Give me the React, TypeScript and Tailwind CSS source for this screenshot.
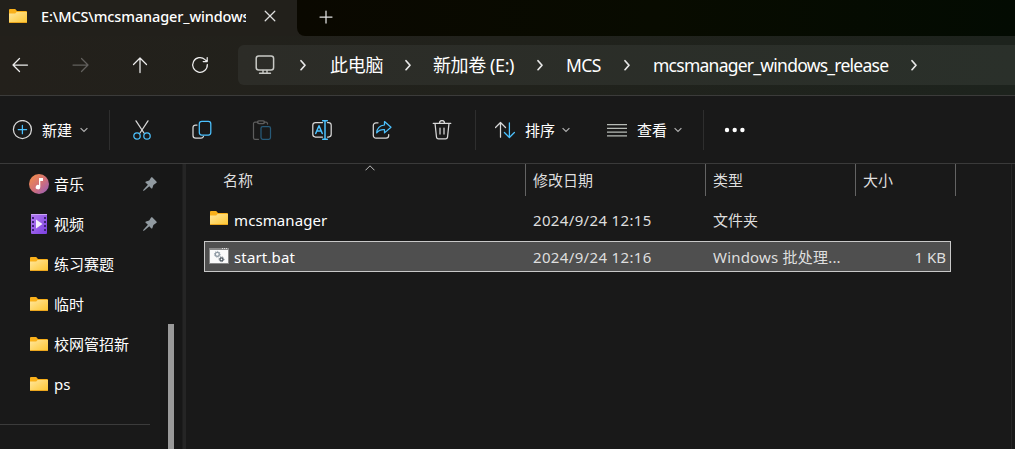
import React from 'react';

const BLUE = '#4cc2ff';

function Folder() {
  return (
    <svg width="18" height="14" viewBox="0 0 18 14" className="shrink-0">
      <defs>
        <linearGradient id="folderFront" x1="0" y1="0" x2="1" y2="1">
          <stop offset="0" stopColor="#ffe69c" />
          <stop offset="1" stopColor="#fdc631" />
        </linearGradient>
      </defs>
      <path d="M0 1a1 1 0 0 1 1-1h5.2l1.8 2h9a1 1 0 0 1 1 1v9H0z" fill="#f9b01a" />
      <path d="M0 4.6h6.2L7.6 3H18v10a1 1 0 0 1-1 1H1a1 1 0 0 1-1-1z" fill="url(#folderFront)" />
      <path d="M0 13h18a1 1 0 0 1-1 1H1a1 1 0 0 1-1-1z" fill="#eba61e" />
    </svg>
  );
}

function Icon({ children, className = '', color = '#d8d8d8' }: { children: React.ReactNode; className?: string; color?: string }) {
  return (
    <svg width="20" height="20" viewBox="0 0 20 20" fill="none" stroke={color} strokeWidth="1.25" strokeLinecap="round" strokeLinejoin="round" className={`shrink-0 ${className}`}>
      {children}
    </svg>
  );
}

function Crumb() {
  return (
    <Icon color="#e8e8e8">
      <path d="M8 5.7 12 10.2 8 14.7" strokeWidth="1.7" />
    </Icon>
  );
}

function Down() {
  return (
    <svg width="8" height="6" viewBox="0 0 8 6" fill="none" stroke="#b0b0b0" strokeWidth="1.2" className="shrink-0">
      <path d="M.6 1.1 4 4.5 7.4 1.1" />
    </svg>
  );
}

function Divider() {
  return <div className="h-10 w-px shrink-0 bg-[#2e2e2e]" />;
}

function Pin() {
  return (
    <svg width="14" height="14" viewBox="0 0 14 14" className="shrink-0">
      <path d="M7.900.8c.6-.6 1.200-.6 1.800 0l3.700 3.700c.5.5.5 1.200-.2 1.600l-2.800 1.800-1 3.100c-.2.700-.8.800-1.300.3L6.300 9.200 1.300 13.600 0 14l.4-1.300 4.500-5L2.700 5.700c-.5-.5-.3-1.100.3-1.300l3.200-1z" fill="#929ba1" />
    </svg>
  );
}

function Music() {
  return (
    <svg width="20" height="20" viewBox="0 0 20 20" className="-mx-px shrink-0">
      <defs>
        <linearGradient id="musicDisc" x1="0.1" y1="0.1" x2="0.9" y2="0.95">
          <stop offset="0" stopColor="#f08a4e" />
          <stop offset="0.55" stopColor="#cf6f7c" />
          <stop offset="1" stopColor="#9b5fb5" />
        </linearGradient>
      </defs>
      <circle cx="10" cy="10" r="10" fill="url(#musicDisc)" />
      <path d="M10 4h4v3h-2.700v6a2.300 2.300 0 1 1-1.300-2z" fill="#fff" />
    </svg>
  );
}

function Film() {
  return (
    <svg width="16" height="20" viewBox="0 0 16 20" className="mx-px shrink-0">
      <defs>
        <linearGradient id="filmBody" x1="0" y1="0" x2="1" y2="1">
          <stop offset="0" stopColor="#b47cf2" />
          <stop offset="1" stopColor="#7b3fe0" />
        </linearGradient>
      </defs>
      <rect width="16" height="20" rx="1" fill="url(#filmBody)" />
      <path d="M0 .5h16" stroke="#c9a4f7" />
      {[3, 7, 11, 15].map((y) => (
        <g key={y} fill="#3f2478">
          <rect x="1" y={y} width="2" height="2" />
          <rect x="13" y={y} width="2" height="2" />
        </g>
      ))}
      <path d="M5 5.500 11.500 10 5 14.500z" fill="#f4eefc" />
    </svg>
  );
}

function Gear({ x, y, r, color }: { x: number; y: number; r: number; color: string }) {
  return (
    <g stroke={color} fill="none">
      <circle cx={x} cy={y} r={r} strokeWidth="1.300" />
      <circle cx={x} cy={y} r={r + 0.9} strokeWidth="1" strokeDasharray="1.100 1.100" />
    </g>
  );
}

function BatFile() {
  return (
    <svg width="20" height="16" viewBox="0 0 20 16" className="-mx-px shrink-0">
      <rect width="20" height="16" fill="#898989" />
      <rect x="1" y="2" width="18" height="13" fill="#fafafa" />
      <path d="M13 .5h1m1 0h1m1 0h1" stroke="#ddd" />
      <Gear x={8.3} y={6.3} r={2} color="#8f9aa4" />
      <Gear x={12.5} y={11.3} r={1.5} color="#4f5962" />
    </svg>
  );
}

const pinned = [
  { icon: <Music />, name: '音乐', pin: true },
  { icon: <Film />, name: '视频', pin: true },
  { icon: <Folder />, name: '练习赛题' },
  { icon: <Folder />, name: '临时' },
  { icon: <Folder />, name: '校网管招新' },
  { icon: <Folder />, name: 'ps' },
];

export default function App() {
  return (
    <div className="flex h-[449px] w-[1015px] flex-col overflow-hidden bg-[#191919] text-[15px] leading-5 text-white [font-family:'Noto_Sans','Noto_Sans_CJK_SC',sans-serif]">
      <header className="h-24 shrink-0 border-b border-[#3b3b3a] bg-linear-to-r from-[#23201b] via-[#21221c] to-[#1d231d]">
        <div className="flex h-9">
          <div className="flex h-9 w-[297px] shrink-0 items-start bg-[#22201b] pl-[9px]">
            <div className="pt-[9px]"><Folder /></div>
            <span className="ml-[14px] mt-[6px] w-[205px] overflow-hidden whitespace-nowrap text-[14.5px] font-medium tracking-[-0.13px]">E:\MCS\mcsmanager_windows</span>
            <Icon className="ml-[14px] mt-[6px]" color="#dedede"><path d="m5.2 5.2 9.600 9.600m0-9.600-9.600 9.600" /></Icon>
          </div>
          <div className="h-9 flex-1 bg-[#22201b]">
            <div className="h-9 rounded-bl-lg bg-linear-to-r from-[#0a0800] via-[#080b00] to-[#030b02] pl-[19px] pt-[7px]">
              <Icon color="#e2e2e2"><path d="M10 4v12M4 10h12" /></Icon>
            </div>
          </div>
        </div>
        <div className="flex h-[59px] items-start pt-[9px]">
          <div className="flex h-10 gap-5">
            <div className="flex w-10 items-center justify-center"><Icon color="#ededed"><path d="M17.500 10H3M9.500 3.500 3 10 9.500 16.500" /></Icon></div>
            <div className="flex w-10 items-center justify-center"><Icon color="#62605d"><path d="M3 10h14.500M11.500 3.500 18 10l-6.500 6.500" /></Icon></div>
            <div className="flex w-10 items-center justify-center"><Icon color="#ededed"><path d="M10 17.500V3M3.500 9.500 10 3l6.500 6.500" /></Icon></div>
            <div className="flex w-10 items-center justify-center"><Icon color="#ededed"><path d="M17.300 9.500A7.300 7.300 0 1 1 15 4.600l2 1.900M17.200 2.500v4h-4" /></Icon></div>
          </div>
          <div className="ml-[18px] flex h-10 flex-1 items-center rounded-l-md bg-linear-to-r from-[#2c2c27] to-[#2a302a] pl-[17px] text-[18px] leading-6">
            <Icon color="#c9cac6"><rect x="1.200" y="1" width="17.400" height="14" rx="2.500" strokeWidth="1.500" /><path d="M8 15.500V18m4-2.500V18M4.500 18.300h11" strokeWidth="1.400" /></Icon>
            <div className="ml-[18px] flex"><Crumb /></div>
            <span className="-mt-px ml-[17px] w-[68px] whitespace-nowrap tracking-[-0.200px]">此电脑</span>
            <Crumb />
            <span className="-mt-px ml-[15px] w-[97px] whitespace-nowrap tracking-[-0.400px]">新加卷 (E:)</span>
            <Crumb />
            <span className="ml-4 w-[51px] whitespace-nowrap text-[17.500px] tracking-[-0.550px]">MCS</span>
            <Crumb />
            <span className="ml-4 w-[251px] whitespace-nowrap text-[17.500px] tracking-[-0.750px]">mcsmanager_windows_release</span>
            <Crumb />
          </div>
        </div>
      </header>

      <div className="flex h-[68px] shrink-0 items-center border-b border-[#3a3a3a] pl-3 pt-px">
        <Icon><circle cx="10.400" cy="9.500" r="9" /><path d="M10.400 5.300v8.400M6.200 9.500h8.400" stroke={BLUE} /></Icon>
        <span className="ml-[10px] mr-2 w-[30px]">新建</span>
        <Down />
        <div className="ml-[21px]"><Divider /></div>
        <div className="ml-[22px] flex gap-10">
          <Icon>
            <path d="M4 .8 12 13M16 .8 8 13" />
            <circle cx="5" cy="16" r="3.200" stroke={BLUE} /><circle cx="15" cy="16" r="3.200" stroke={BLUE} />
          </Icon>
          <Icon>
            <path d="M5 5H3.500A2.500 2.500 0 0 0 1 7.500v8A2.700 2.700 0 0 0 3.700 18.200H9a3 3 0 0 0 2.500-1.700" />
            <rect x="7.300" y="1.300" width="11.500" height="13.700" rx="2.500" stroke={BLUE} />
          </Icon>
          <Icon color="#5d5d5d">
            <path d="M6 2.200H3A1.500 1.500 0 0 0 1.500 3.700V18A1.500 1.500 0 0 0 3 19.300h3.500M12 2.200h2a1.500 1.500 0 0 1 1.500 1.500V4" />
            <rect x="5.500" y=".8" width="7" height="2.800" rx="1.400" />
            <rect x="9" y="6.500" width="9.500" height="12.800" rx="1.700" stroke="#275a78" />
          </Icon>
          <Icon>
            <path d="M10.500 2.500H3.500A2.700 2.700 0 0 0 .8 5.200v9.100A2.700 2.700 0 0 0 3.500 17h7M15.500 2.500h1A2.700 2.700 0 0 1 19.200 5.200v9.100a2.700 2.700 0 0 1-2.700 2.700h-1" />
            <path d="M3.700 13.500 7 5.800l3.300 7.700M4.900 11h4.200M13 .8v18.400M10.700.8h4.600M10.700 19.200h4.600" stroke={BLUE} strokeWidth="1.500" />
          </Icon>
          <Icon>
            <path d="M6 2.800H4A2.700 2.700 0 0 0 1.300 5.500v10A2.700 2.700 0 0 0 4 18.200h10a2.700 2.700 0 0 0 2.700-2.700v-1" />
            <path d="M12.500 1.500 19 7.200 12.500 12.900V9.700c-3.500-.2-6 .8-7.800 3.200C5 8.500 8 5.400 12.500 5z" stroke={BLUE} />
          </Icon>
          <Icon>
            <path d="M1.200 3.300h17.600M3 3.300l1.500 13.900a2 2 0 0 0 2 1.700h7a2 2 0 0 0 2-1.700L17 3.300M7.500 3.100a2.500 2.500 0 0 1 5 0M8 8v6M12 8v6" />
          </Icon>
        </div>
        <div className="ml-[23px]"><Divider /></div>
        <Icon className="ml-[19px]">
          <path d="M5.500 17.200V2.800M.5 7.500l5-5 5 5" />
          <path d="M14.400 2.800v14.400M9.400 12.500l5 5 5-5" stroke={BLUE} />
        </Icon>
        <span className="ml-[10px] mr-[7px] w-[30px]">排序</span>
        <Down />
        <Icon className="ml-[37px]" color="#b7bbb6"><path d="M0 4.500h20M0 8.300h20M0 12h20M0 15.800h20" strokeLinecap="butt" /></Icon>
        <span className="ml-[10px] mr-[7px] w-[30px]">查看</span>
        <Down />
        <div className="ml-[21px]"><Divider /></div>
        <svg width="22" height="6" viewBox="0 0 22 6" fill="#fff" className="ml-5 shrink-0">
          <circle cx="3" cy="3" r="2.200" />
          <circle cx="10.700" cy="3" r="2.200" />
          <circle cx="18.400" cy="3" r="2.200" />
        </svg>
      </div>

      <div className="flex min-h-0 flex-1">
        <nav className="w-[160px] shrink-0">
          {pinned.map((item) => (
            <div key={item.name} className="flex h-10 items-center pl-[30px] pr-[3px]">
              {item.icon}
              <span className="ml-[6px] flex-1 whitespace-nowrap">{item.name}</span>
              {item.pin && <Pin />}
            </div>
          ))}
          <div className="mt-5 h-px w-[150px] bg-[#3b3b3b]" />
        </nav>
        <div className="w-[22px] shrink-0 bg-[#171717] pl-2 pt-[160px]">
          <div className="h-[125px] w-[6px] bg-[#999]" />
        </div>
        <div className="w-1 shrink-0 border-l border-[#1e1e1e] bg-[#252525]" />
        <main className="flex w-[826px] shrink-0 flex-col border-r border-[#262626] text-[#dedede]">
          <div className="flex h-8 leading-8">
            <div className="relative w-[340px] border-r border-[#636363] pl-[37px]">
              名称
              <svg width="10" height="6" viewBox="0 0 10 6" fill="none" stroke="#bdbdbd" className="absolute left-[179px] top-px"><path d="M.5 5.300 5 .8l4.500 4.500" /></svg>
            </div>
            <div className="w-[180px] border-r border-[#636363] pl-[7px]">修改日期</div>
            <div className="w-[150px] border-r border-[#636363] pl-[7px]">类型</div>
            <div className="w-[100px] border-r border-[#636363] pl-[7px]">大小</div>
          </div>
          <div className="ml-[18px] mt-[8px] flex h-[31px] w-[747px] items-center border border-transparent pl-[5px]">
            <div className="flex w-[323px] items-center gap-[6px] text-white"><div className="-mt-[3px]"><Folder /></div><span className="tracking-[0.1px]">mcsmanager</span></div>
            <span className="w-[180px] tracking-[0.350px]">2024/9/24 12:15</span>
            <span>文件夹</span>
          </div>
          <div className="ml-[18px] mt-[6px] flex h-[31px] w-[747px] items-center border border-[#c8c8c8] bg-[#4f4f4f] pl-[5px] pr-1">
            <div className="flex w-[323px] items-center gap-[6px] text-white"><div className="-mx-px -mt-[2px] flex"><div className="mx-px"><BatFile /></div></div><span className="tracking-[0.150px]">start.bat</span></div>
            <span className="w-[180px] tracking-[0.350px]">2024/9/24 12:16</span>
            <span className="tracking-[0.200px]">Windows 批处理...</span>
            <span className="ml-auto">1 KB</span>
          </div>
        </main>
      </div>
    </div>
  );
}
